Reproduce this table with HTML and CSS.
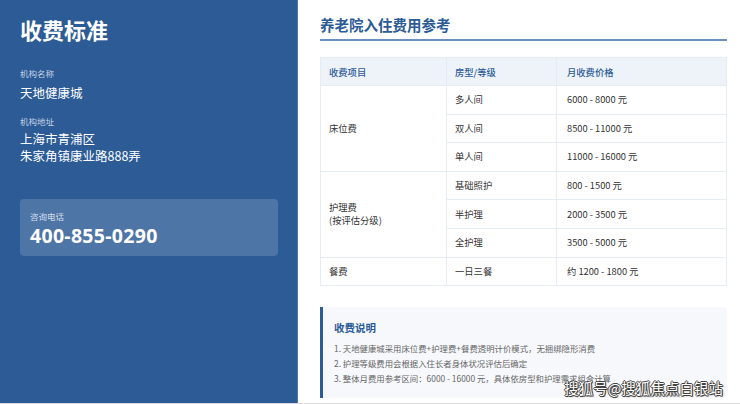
FILE: index.html
```html
<!DOCTYPE html>
<html lang="zh-CN">
<head>
<meta charset="utf-8">
<title>收费标准</title>
<link rel="stylesheet" href="styles.css">
</head>
<body>
<div class="page">
  <aside class="side">
    <h1 class="side-title">收费标准</h1>
    <div class="label first">机构名称</div>
    <div class="value">天地健康城</div>
    <div class="label second">机构地址</div>
    <div class="value addr">上海市青浦区<br>朱家角镇康业路888弄</div>
    <div class="card">
      <div class="card-label">咨询电话</div>
      <div class="phone">400-855-0290</div>
    </div>
  </aside>
  <main class="main">
    <h2 class="main-title">养老院入住费用参考</h2>
    <table class="fees">
      <thead>
        <tr><th class="c1">收费项目</th><th class="c2">房型/等级</th><th class="c3">月收费价格</th></tr>
      </thead>
      <tbody>
        <tr><td rowspan="3">床位费</td><td>多人间</td><td>6000 - 8000 元</td></tr>
        <tr><td>双人间</td><td>8500 - 11000 元</td></tr>
        <tr><td>单人间</td><td>11000 - 16000 元</td></tr>
        <tr><td rowspan="3">护理费<br>(按评估分级)</td><td>基础照护</td><td>800 - 1500 元</td></tr>
        <tr><td>半护理</td><td>2000 - 3500 元</td></tr>
        <tr><td>全护理</td><td>3500 - 5000 元</td></tr>
        <tr><td>餐费</td><td>一日三餐</td><td>约 1200 - 1800 元</td></tr>
      </tbody>
    </table>
    <section class="notes">
      <h3 class="notes-title">收费说明</h3>
      <ol class="notes-list">
        <li>1. 天地健康城采用床位费+护理费+餐费透明计价模式，无捆绑隐形消费</li>
        <li>2. 护理等级费用会根据入住长者身体状况评估后确定</li>
        <li>3. 整体月费用参考区间：6000 - 16000 元，具体依房型和护理需求组合计算</li>
      </ol>
    </section>
  </main>
  <div class="watermark">搜狐号@搜狐焦点白银站</div>
</div>
</body>
</html>
```

FILE: styles.css
```css
* { box-sizing: border-box; margin: 0; padding: 0; }
html, body { width: 740px; height: 404px; overflow: hidden; }
body {
  background: #dcdcdc;
  font-family: "Noto Sans", "Noto Sans CJK SC", sans-serif;
  color: #333;
}
.page {
  position: relative;
  width: 740px;
  height: 403px;
  display: flex;
  background: #fff;
}
.side {
  width: 298px;
  flex: none;
  background: #2c5b96;
  border-right: 1px solid #4f76a8;
  color: #fff;
  padding: 0 20px;
  font-family: "Noto Sans CJK SC", sans-serif;
}
.side-title {
  font-size: 22px;
  line-height: 30px;
  font-weight: 700;
  margin-top: 14px;
}
.label {
  font-size: 8.5px;
  line-height: 12px;
  color: #c3d1e4;
}
.label.first { margin-top: 23px; }
.label.second { margin-top: 13.5px; }
.value {
  font-size: 12.5px;
  line-height: 17px;
  color: #fff;
  margin-top: 5px;
}
.value.addr { margin-top: 3px; line-height: 17.4px; }
.card {
  margin-top: 35px;
  width: 258px;
  background: rgba(255, 255, 255, 0.16);
  border-radius: 4px;
  padding: 10.4px 10px 9.7px;
}
.card-label {
  font-size: 8.5px;
  line-height: 12px;
  color: #d3ddeb;
}
.phone {
  margin-top: 3px;
  font-family: "Noto Sans", sans-serif;
  font-size: 19.5px;
  line-height: 22px;
  font-weight: 700;
  letter-spacing: 0.3px;
}
.main {
  flex: 1;
  padding: 15px 13px 0 22px;
  font-family: "Noto Sans CJK SC", sans-serif;
}
.main-title {
  font-size: 14.5px;
  line-height: 20px;
  font-weight: 700;
  color: #2c5b96;
  padding-bottom: 4px;
  border-bottom: 2px solid #6b8fbf;
}
.fees {
  margin-top: 16px;
  width: 407px;
  border-collapse: collapse;
  font-size: 9.3px;
}
.fees th, .fees td {
  border: 1px solid #e6ecf5;
  text-align: left;
  padding: 0 8px;
  height: 28.6px;
}
.fees th {
  height: 28px;
  background: #eef3fa;
  color: #2c5b96;
  font-weight: 500;
}
.fees .c1 { width: 126px; }
.fees .c2 { width: 110px; }
.fees td:nth-last-child(1) { padding-left: 10px; }
.fees th.c3 { padding-left: 10px; }
.fees td { color: #333; line-height: 13px; }
.notes {
  margin-top: 20.7px;
  width: 407px;
  background: #f6f8fc;
  border-left: 3px solid #2c5b96;
  border-radius: 0 4px 4px 0;
  padding: 14px 10px 12px 11px;
}
.notes-title {
  font-size: 10.5px;
  line-height: 14px;
  font-weight: 700;
  color: #2c5b96;
}
.notes-list {
  list-style: none;
  margin-top: 6.6px;
  font-size: 8.4px;
  line-height: 14.8px;
  color: #666;
}
.watermark {
  position: absolute;
  right: 17px;
  bottom: 5px;
  font-family: "Noto Sans CJK SC", sans-serif;
  font-size: 14.3px;
  line-height: 20px;
  color: #fff;
  letter-spacing: 0.2px;
  text-shadow: 1px 0 0 #444, -1px 0 0 #444, 0 1px 0 #444, 0 -1px 0 #444, 1px 1px 1px #333;
}
```
